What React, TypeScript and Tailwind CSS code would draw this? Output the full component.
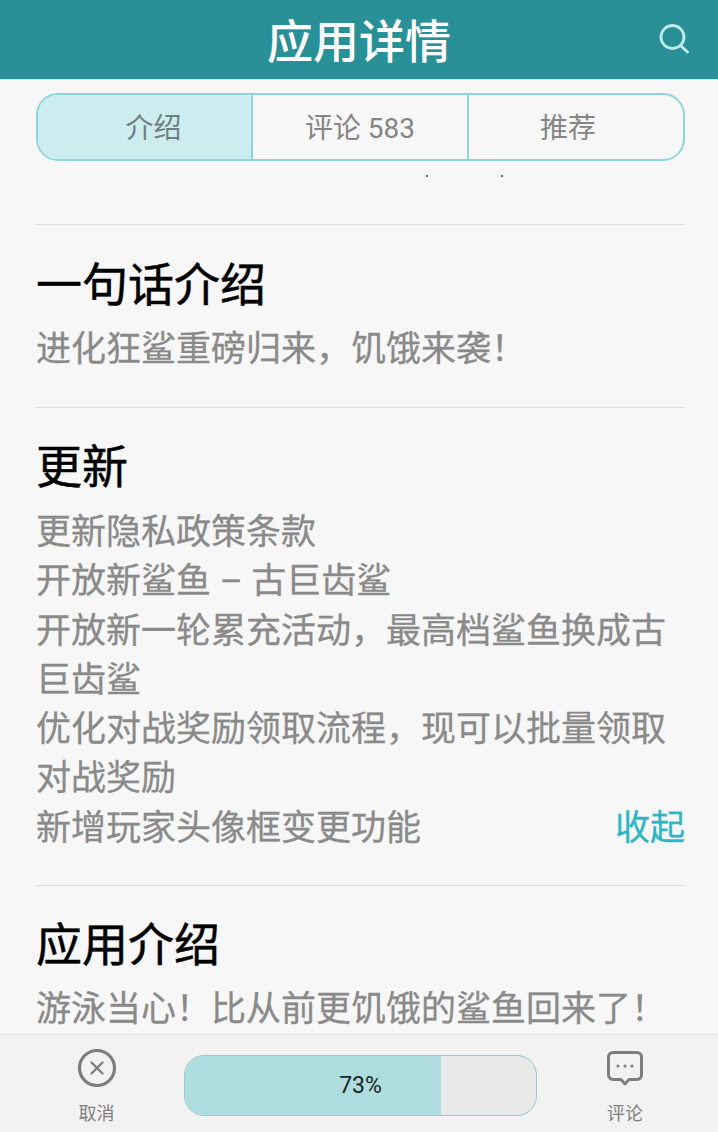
const comma = "\uFF0C";
const bang = "\uFF01";

const updates = [
  "更新隐私政策条款",
  "开放新鲨鱼 – 古巨齿鲨",
  `开放新一轮累充活动${comma}最高档鲨鱼换成古巨齿鲨`,
  `优化对战奖励领取流程${comma}现可以批量领取对战奖励`,
];

function Heading({ children }: { children: string }) {
  return <h2 className="text-[46px] leading-[60px] font-normal text-black [-webkit-text-stroke:0.5px_#000]">{children}</h2>;
}

export default function App() {
  return (
    <div
      className="flex h-[1132px] w-[718px] flex-col overflow-hidden bg-[#f7f7f7]"
      style={{ fontFamily: 'Roboto, "Noto Sans CJK SC", sans-serif' }}
    >
      {/* Header */}
      <header className="relative flex h-[80px] shrink-0 items-start justify-center border-b border-[#c5edf0] bg-[#2a9097]">
        <h1 className="mt-[16px] text-[46px] font-medium leading-[52px] text-white">应用详情</h1>
        <svg
          className="absolute right-[27px] top-[22px] h-[34px] w-[34px]"
          viewBox="0 0 34 34"
          fill="none"
          stroke="#c0ecee"
          strokeWidth="2.8"
          strokeLinecap="round"
        >
          <circle cx="15.5" cy="15" r="11.5" />
          <path d="M24 24l6.5 6" />
        </svg>
      </header>

      <main className="min-h-0 flex-1 overflow-hidden pl-[36px] pr-[33px]">
        {/* Tabs */}
        <div className="mt-[13px] flex h-[68px] w-[649px] overflow-hidden rounded-[22px] border-2 border-[#8ed6d9] text-[28px] leading-[68px] text-[#858585]">
          <div className="flex w-[215px] justify-center border-r-2 border-[#8ed6d9] bg-[#cdecf0] pl-[18px] text-[#6f7f80]">介绍</div>
          <div className="flex w-[216px] justify-center border-r-2 border-[#8ed6d9]">评论 583</div>
          <div className="flex flex-1 justify-center pr-[16px]">推荐</div>
        </div>

        {/* Stray dots */}
        <div className="mt-[14px] flex h-[2px] pl-[390px]">
          <span className="h-[2px] w-[2px] bg-[#666666]" />
          <span className="ml-[73px] h-[2px] w-[2px] bg-[#666666]" />
        </div>

        {/* One line intro */}
        <section className="mt-[47px] border-t border-[#dedede] pt-[30px]">
          <Heading>一句话介绍</Heading>
          <p className="mt-[10px] text-[35px] leading-[49px] text-[#8a8a8a] [-webkit-text-stroke:0.3px_#8a8a8a]">
            {`进化狂鲨重磅归来${comma}饥饿来袭${bang}`}
          </p>
        </section>

        {/* Update notes */}
        <section className="mt-[33px] border-t border-[#dedede] pt-[29px]">
          <Heading>更新</Heading>
          <div className="mt-[11px] text-[35px] leading-[49.3px] text-[#8a8a8a] [-webkit-text-stroke:0.3px_#8a8a8a]">
            {updates.map((line) => (
              <p key={line}>{line}</p>
            ))}
            <div className="flex justify-between">
              <p>新增玩家头像框变更功能</p>
              <span className="text-[#2eb6c4] [-webkit-text-stroke:0.3px_#2eb6c4]">收起</span>
            </div>
          </div>
        </section>

        {/* App intro */}
        <section className="mt-[32px] border-t border-[#dedede] pt-[29px]">
          <Heading>应用介绍</Heading>
          <p className="mt-[10px] text-[35px] leading-[49px] text-[#8a8a8a] [-webkit-text-stroke:0.3px_#8a8a8a]">
            {`游泳当心${bang}比从前更饥饿的鲨鱼回来了${bang}`}
          </p>
        </section>
      </main>

      {/* Bottom bar */}
      <footer className="flex h-[98px] shrink-0 items-start border-t border-[#e2e2e2] bg-[#f2f2f2] text-[18px] text-[#808080]">
        <div className="flex w-[184px] flex-col items-center pl-[9px] pt-[13px]">
          <svg className="h-[40px] w-[40px]" viewBox="0 0 40 40" fill="none" stroke="#7d7d7d" strokeWidth="3.2" strokeLinecap="round">
            <circle cx="20" cy="20" r="17.5" />
            <path d="M14.500 14.500l11 11M25.500 14.500l-11 11" strokeWidth="2.4" />
          </svg>
          <span className="mt-[13px] leading-[26px]">取消</span>
        </div>
        <div className="relative mt-[20px] flex h-[61px] w-[353px] overflow-hidden rounded-[20px] border border-[#94c9cf] bg-[#e9e9e9]">
          <div className="w-[73%] bg-[#aedcdf]" />
          <span className="absolute inset-0 flex items-center justify-center pt-[2px] text-[23px] text-[#1b2526]">73%</span>
        </div>
        <div className="flex flex-1 flex-col items-center pr-[5px] pt-[15px]">
          <svg className="h-[38px] w-[38px]" viewBox="0 0 38 38" fill="none" stroke="#7d7d7d" strokeWidth="3" strokeLinejoin="round">
            <path d="M7 2.500h24a4.500 4.500 0 0 1 4.500 4.500v18a4.500 4.500 0 0 1-4.500 4.500h-8L19 34l-4-4.500H7A4.500 4.500 0 0 1 2.500 25V7A4.500 4.500 0 0 1 7 2.500z" />
            <circle cx="12" cy="16" r="1.600" fill="#7d7d7d" stroke="none" />
            <circle cx="19" cy="16" r="1.600" fill="#7d7d7d" stroke="none" />
            <circle cx="26" cy="16" r="1.600" fill="#7d7d7d" stroke="none" />
          </svg>
          <span className="mt-[13px] leading-[26px]">评论</span>
        </div>
      </footer>
    </div>
  );
}
